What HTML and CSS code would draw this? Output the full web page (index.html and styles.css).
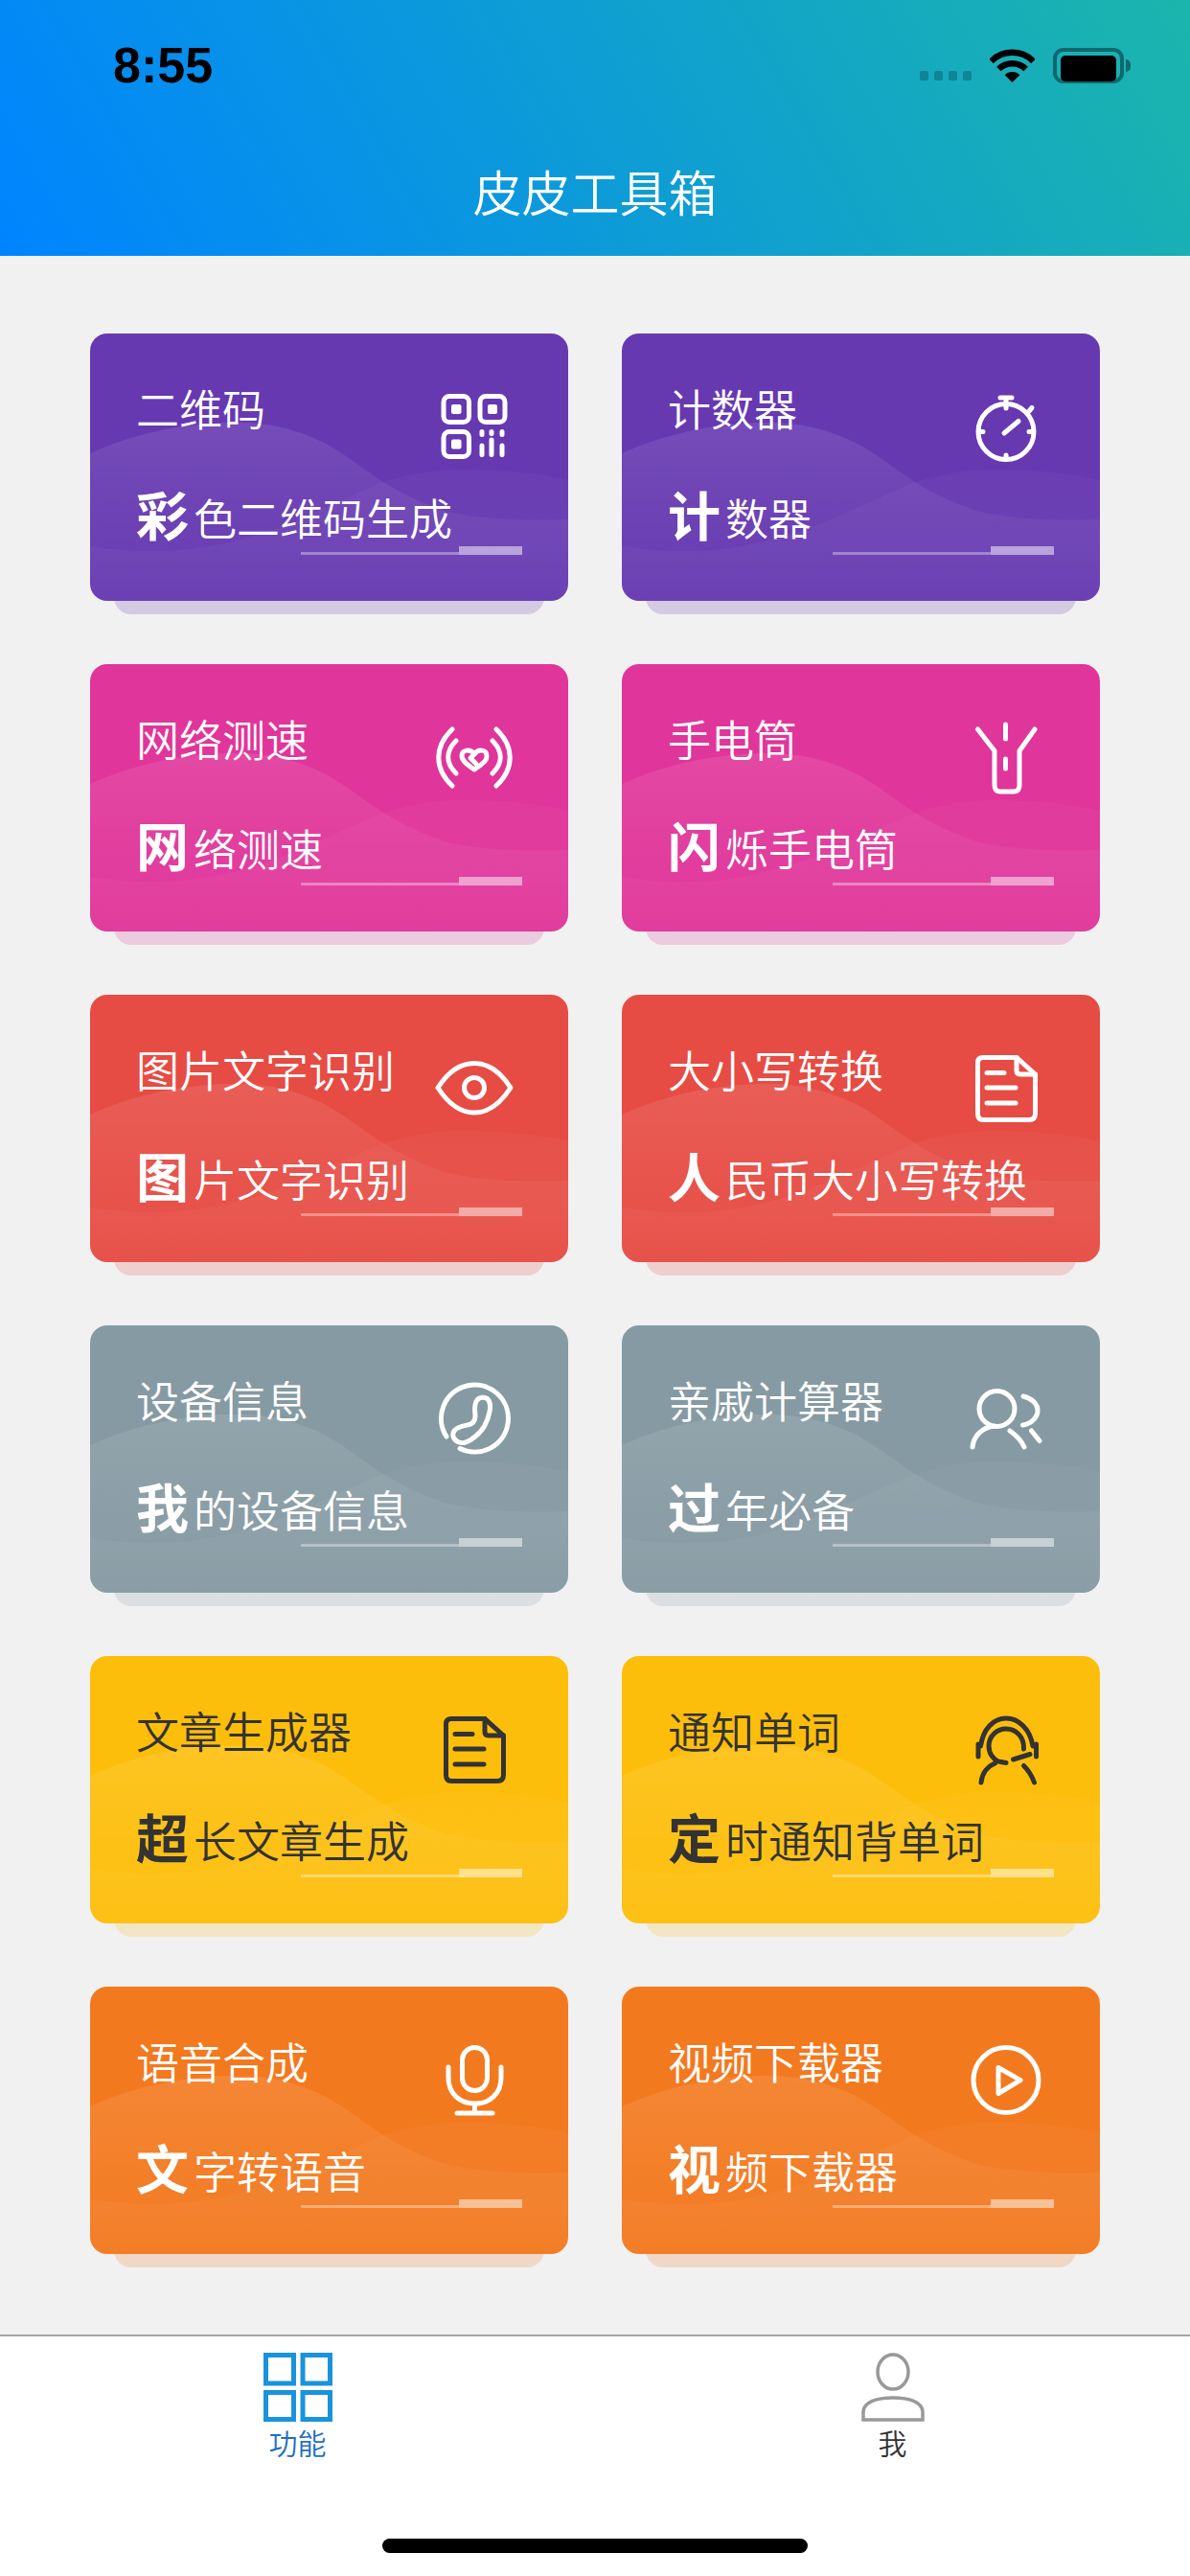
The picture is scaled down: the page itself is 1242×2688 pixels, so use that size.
FILE: index.html
```html
<!DOCTYPE html>
<html lang="zh-CN">
<head>
<meta charset="utf-8">
<title>皮皮工具箱</title>
<link rel="stylesheet" href="styles.css">
</head>
<body>
<svg class="sprite" aria-hidden="true">
  <defs>
    <linearGradient id="grad-a" x1="0" y1="90" x2="0" y2="279" gradientUnits="userSpaceOnUse">
      <stop offset="0" stop-color="#fff" stop-opacity=".1"/>
      <stop offset=".55" stop-color="#fff" stop-opacity=".045"/>
      <stop offset="1" stop-color="#fff" stop-opacity=".015"/>
    </linearGradient>
    <linearGradient id="grad-b" x1="0" y1="140" x2="0" y2="279" gradientUnits="userSpaceOnUse">
      <stop offset="0" stop-color="#fff" stop-opacity=".03"/>
      <stop offset=".6" stop-color="#fff" stop-opacity=".035"/>
      <stop offset="1" stop-color="#fff" stop-opacity=".02"/>
    </linearGradient>
    <symbol id="waves" viewBox="0 0 499 279">
      <path fill="url(#grad-a)" d="M0 125C40 107 90 94 145 93C190 92 220 102 246 115C270 128 285 142 306 155C330 170 350 178 370 185C400 193 450 196 499 194V279H0Z"/>
      <path fill="url(#grad-b)" d="M0 222C40 228 70 228 94 226C140 222 170 212 198 202C235 188 270 170 306 155C340 145 365 142 387 142C430 142 470 146 499 153V279H0Z"/>
    </symbol>
    <symbol id="i-qr" viewBox="0 0 90 90">
      <g class="ln">
        <rect x="13" y="13.500" width="26.500" height="27" rx="6"/>
        <rect x="51" y="13.500" width="26" height="27" rx="6"/>
        <rect x="13" y="50.500" width="26.500" height="26" rx="6"/>
        <path d="M53 50.500v3M63 50.500v2M74 50.500v3M53 65v9.500M63 59v15.500M74 65v9.500"/>
      </g>
      <rect class="fl" x="21" y="22" width="10.500" height="10" rx="2"/>
      <rect class="fl" x="59" y="22" width="10" height="10" rx="2"/>
      <rect class="fl" x="21" y="58.500" width="10.500" height="10" rx="2"/>
    </symbol>
    <symbol id="i-clock" viewBox="0 0 90 90">
      <g class="ln">
        <circle cx="45" cy="50.500" r="29"/>
        <path d="M39 15h12M45 15v6M43 52l15-12.500M69 29l3-3.500M45 22v4M45 75v4M17 50.500h4M69 50.500h4"/>
      </g>
    </symbol>
    <symbol id="i-signal" viewBox="0 0 90 90">
      <g class="ln">
        <path d="M22 16C3 34 3 57 22 75M26 28C15 39 15 51 26 62M68 16C87 34 87 57 68 75M64 28C75 39 75 51 64 62"/>
        <path d="M52 53L45 58C38 53 32 49 32 44C32 37 41 36 45 42C49 36 58 37 58 44C58 47 56 50 53 52"/>
        <path d="M45 42L41 46L47 52"/>
      </g>
    </symbol>
    <symbol id="i-torch" viewBox="0 0 90 90">
      <g class="ln">
        <path d="M44.500 11v15M44.500 47v10"/>
        <path d="M15.500 16L33 38.500V74Q33 81 39 81H53Q59 81 59 74V38.500L75 16"/>
      </g>
    </symbol>
    <symbol id="i-eye" viewBox="0 0 90 90">
      <g class="ln">
        <path d="M7 45C20 25 33 19.500 45 19.500C57 19.500 70 25 83 45C70 65 57 71 45 71C33 71 20 65 7 45Z"/>
        <circle cx="45" cy="45" r="10.500"/>
      </g>
    </symbol>
    <symbol id="i-doc" viewBox="0 0 90 90">
      <g class="ln">
        <path d="M21 13.500H56L75.500 31V72Q75.500 78.500 69 78.500H21Q15.500 78.500 15.500 72V19Q15.500 13.500 21 13.500Z"/>
        <path d="M56 13.500V27Q56 31 60 31H75.500"/>
        <path d="M25 29.500H43M25 45H55M25 61H55"/>
      </g>
    </symbol>
    <symbol id="i-phone" viewBox="0 0 90 90">
      <g class="ln">
        <path d="M16 64A35 35 0 1 1 30 76.500"/>
        <path d="M48 26C50 23 56 22 59 25C62 28 62 33 61 38C59 48 54 58 46 64C40 69 34 72 29 70C24 68 21 63 24 58C27 54 33 53 38 52C43 51 46 48 46 43C46 37 44 31 48 26Z"/>
      </g>
    </symbol>
    <symbol id="i-users" viewBox="0 0 90 90">
      <g class="ln">
        <circle cx="35.500" cy="35" r="18.500"/>
        <path d="M10 75C11 63 21 54 33 53M49 58C56 63 61 68 64 75M63 22C72 24 78 30 78 37C78 44 71 51 62.500 52M71.500 58L80 68.500"/>
      </g>
    </symbol>
    <symbol id="i-headset" viewBox="0 0 90 90">
      <g class="ln">
        <path d="M18.500 42C21 24 32 13 45 13C58 13 70 24 73 42M16 40V53M76.500 40V53"/>
        <path d="M63.500 45C64 32 55 24 45 24C35 24 27 32 27 42C27 50 32 56 37 58L45 59.500M52.500 56L70 50.500"/>
        <path d="M19 80C20 70 26 63 33.500 60M63.500 62.500C68 67 72 73 74.500 80"/>
      </g>
    </symbol>
    <symbol id="i-mic" viewBox="0 0 90 90">
      <g class="ln">
        <rect x="32.500" y="11.500" width="26" height="45" rx="13"/>
        <path d="M18 32V43C18 60 30 70 45.500 70C61 70 73 60 73 43V32M45.500 70V80M27 80H64"/>
      </g>
    </symbol>
    <symbol id="i-play" viewBox="0 0 90 90">
      <g class="ln">
        <circle cx="45" cy="45.500" r="34"/>
        <path d="M37 32.500L60 45.700L37 59.500Z"/>
      </g>
    </symbol>
  </defs>
</svg>

<header class="header">
  <div class="status">
    <span class="time">8:55</span>
    <div class="status-icons">
      <div class="signal"><i></i><i></i><i></i><i></i></div>
      <svg class="wifi" viewBox="0 0 47 36">
        <path class="wifi-arc" d="M1.500 14A31 31 0 0 1 45.500 14M9.400 22A20 20 0 0 1 37.600 22"/>
        <path d="M23.500 36L15.700 28.200A11 11 0 0 1 31.300 28.200Z"/>
      </svg>
      <div class="battery"><div class="battery-fill"></div></div>
    </div>
  </div>
  <h1 class="title">皮皮工具箱</h1>
</header>

<main class="main">
  <div class="grid">
    <a class="card purple">
      <svg class="waves"><use href="#waves"/></svg>
      <div class="card-top"><span class="card-title">二维码</span><svg class="icon"><use href="#i-qr"/></svg></div>
      <p class="card-sub"><b>彩</b>色二维码生成</p>
      <div class="rule"></div>
    </a>
    <a class="card purple">
      <svg class="waves"><use href="#waves"/></svg>
      <div class="card-top"><span class="card-title">计数器</span><svg class="icon"><use href="#i-clock"/></svg></div>
      <p class="card-sub"><b>计</b>数器</p>
      <div class="rule"></div>
    </a>
    <a class="card pink">
      <svg class="waves"><use href="#waves"/></svg>
      <div class="card-top"><span class="card-title">网络测速</span><svg class="icon"><use href="#i-signal"/></svg></div>
      <p class="card-sub"><b>网</b>络测速</p>
      <div class="rule"></div>
    </a>
    <a class="card pink">
      <svg class="waves"><use href="#waves"/></svg>
      <div class="card-top"><span class="card-title">手电筒</span><svg class="icon"><use href="#i-torch"/></svg></div>
      <p class="card-sub"><b>闪</b>烁手电筒</p>
      <div class="rule"></div>
    </a>
    <a class="card red">
      <svg class="waves"><use href="#waves"/></svg>
      <div class="card-top"><span class="card-title">图片文字识别</span><svg class="icon"><use href="#i-eye"/></svg></div>
      <p class="card-sub"><b>图</b>片文字识别</p>
      <div class="rule"></div>
    </a>
    <a class="card red">
      <svg class="waves"><use href="#waves"/></svg>
      <div class="card-top"><span class="card-title">大小写转换</span><svg class="icon"><use href="#i-doc"/></svg></div>
      <p class="card-sub"><b>人</b>民币大小写转换</p>
      <div class="rule"></div>
    </a>
    <a class="card grey">
      <svg class="waves"><use href="#waves"/></svg>
      <div class="card-top"><span class="card-title">设备信息</span><svg class="icon"><use href="#i-phone"/></svg></div>
      <p class="card-sub"><b>我</b>的设备信息</p>
      <div class="rule"></div>
    </a>
    <a class="card grey">
      <svg class="waves"><use href="#waves"/></svg>
      <div class="card-top"><span class="card-title">亲戚计算器</span><svg class="icon"><use href="#i-users"/></svg></div>
      <p class="card-sub"><b>过</b>年必备</p>
      <div class="rule"></div>
    </a>
    <a class="card yellow">
      <svg class="waves"><use href="#waves"/></svg>
      <div class="card-top"><span class="card-title">文章生成器</span><svg class="icon"><use href="#i-doc"/></svg></div>
      <p class="card-sub"><b>超</b>长文章生成</p>
      <div class="rule"></div>
    </a>
    <a class="card yellow">
      <svg class="waves"><use href="#waves"/></svg>
      <div class="card-top"><span class="card-title">通知单词</span><svg class="icon"><use href="#i-headset"/></svg></div>
      <p class="card-sub"><b>定</b>时通知背单词</p>
      <div class="rule"></div>
    </a>
    <a class="card orange">
      <svg class="waves"><use href="#waves"/></svg>
      <div class="card-top"><span class="card-title">语音合成</span><svg class="icon"><use href="#i-mic"/></svg></div>
      <p class="card-sub"><b>文</b>字转语音</p>
      <div class="rule"></div>
    </a>
    <a class="card orange">
      <svg class="waves"><use href="#waves"/></svg>
      <div class="card-top"><span class="card-title">视频下载器</span><svg class="icon"><use href="#i-play"/></svg></div>
      <p class="card-sub"><b>视</b>频下载器</p>
      <div class="rule"></div>
    </a>
  </div>
</main>

<footer class="tabbar">
  <nav class="tabs">
    <a class="tab tab-on">
      <svg class="tab-icon" viewBox="0 0 72 72">
        <g class="tab-grid">
          <rect x="2.500" y="2.500" width="29" height="29.500"/>
          <rect x="41" y="2.500" width="28.500" height="29.500"/>
          <rect x="2.500" y="41.500" width="29" height="28"/>
          <rect x="41" y="41.500" width="28.500" height="28"/>
        </g>
      </svg>
      <span>功能</span>
    </a>
    <a class="tab">
      <svg class="tab-icon" viewBox="0 0 72 72">
        <g class="tab-user">
          <ellipse cx="36" cy="20" rx="16" ry="18"/>
          <path d="M5 70V62C5 51 20 47 36 47C52 47 67 51 67 62V70Z"/>
        </g>
      </svg>
      <span>我</span>
    </a>
  </nav>
  <div class="home"></div>
</footer>
</body>
</html>
```

FILE: styles.css
```css
* { box-sizing: border-box; }
html, body { margin: 0; padding: 0; }
body {
  width: 1242px;
  height: 2688px;
  display: flex;
  flex-direction: column;
  background: #f1f1f1;
  font-family: "Noto Sans CJK SC", "Noto Sans", sans-serif;
  overflow: hidden;
}
.sprite { position: absolute; width: 0; height: 0; }

.header {
  height: 267px;
  flex: none;
  background: linear-gradient(60deg, #0084ff 0%, #1cb5ac 100%);
}
.status {
  height: 136px;
  padding: 0 64px 0 118px;
  display: flex;
  align-items: center;
  justify-content: space-between;
}
.time {
  font: 700 52px/1 "Liberation Sans", Arial, sans-serif;
  color: #000;
}
.status-icons { display: flex; align-items: center; gap: 19px; }
.signal { display: flex; gap: 6px; align-self: flex-end; margin-bottom: 3px; }
.signal i { width: 9px; height: 10px; border-radius: 2px; background: rgba(0, 0, 0, .22); }
.wifi { width: 47px; height: 36px; fill: #000; }
.wifi-arc { fill: none; stroke: #000; stroke-width: 6.5; }
.battery {
  position: relative;
  width: 74px;
  height: 37px;
  padding: 5px;
  border: 4px solid rgba(0, 0, 0, .4);
  border-radius: 11px;
  margin-right: 5px;
}
.battery::after {
  content: "";
  position: absolute;
  top: 8px;
  right: -11px;
  width: 5px;
  height: 13px;
  border-radius: 0 5px 5px 0;
  background: rgba(0, 0, 0, .4);
}
.battery-fill { margin: -1px; height: 27px; border-radius: 5px; background: #000; }
.title {
  margin: 0;
  height: 131px;
  padding-bottom: 6px;
  display: flex;
  align-items: center;
  justify-content: center;
  font-size: 51px;
  font-weight: 350;
  color: #fff;
}

.main {
  flex: 1;
  padding: 81px 94px 0;
  isolation: isolate;
}
.grid {
  display: grid;
  grid-template-columns: 499px 499px;
  grid-auto-rows: 279px;
  column-gap: 56px;
  row-gap: 66px;
}
.card {
  position: relative;
  display: block;
  padding: 48px 53px 0 48px;
  border-radius: 18px;
  background: var(--c);
  color: var(--t, #fff);
}
.card::after {
  content: "";
  position: absolute;
  left: 25px;
  right: 25px;
  bottom: -14px;
  height: 60px;
  border-radius: 18px;
  background: var(--c);
  opacity: .2;
  z-index: -1;
}
.purple { --c: #6639b1; }
.pink { --c: #e0359a; }
.red { --c: #e64c44; }
.grey { --c: #869aa3; }
.yellow { --c: #fdbe0b; --t: #333; }
.orange { --c: #f3791f; }

.waves {
  position: absolute;
  left: 0;
  top: 0;
  width: 100%;
  height: 100%;
  border-radius: 18px;
}
.card-top {
  position: relative;
  height: 107px;
  display: flex;
  justify-content: space-between;
  align-items: flex-start;
}
.card-title { font-size: 45px; line-height: 60px; font-weight: 350; }
.icon { width: 90px; height: 90px; margin-top: 4px; flex: none; }
.ln { fill: none; stroke: currentColor; stroke-width: 5; stroke-linecap: round; stroke-linejoin: round; }
.fl { fill: currentColor; }
.card-sub {
  position: relative;
  margin: 0;
  height: 64px;
  font-size: 45px;
  line-height: 64px;
  font-weight: 350;
  white-space: nowrap;
}
.card-sub b { font-size: 55px; font-weight: 700; margin-right: 5px; }
.rule {
  position: absolute;
  right: 48px;
  bottom: 48px;
  width: 231px;
  height: 9px;
  background:
    linear-gradient(rgba(255, 255, 255, .5), rgba(255, 255, 255, .5)) right bottom / 66px 9px no-repeat,
    linear-gradient(rgba(255, 255, 255, .35), rgba(255, 255, 255, .35)) left bottom / 165px 3px no-repeat;
}

.tabbar {
  height: 252px;
  flex: none;
  display: flex;
  flex-direction: column;
  border-top: 2px solid #a6a6a6;
  background: #fff;
}
.tabs { display: flex; }
.tab {
  flex: 1;
  padding-top: 17px;
  display: flex;
  flex-direction: column;
  align-items: center;
  font-size: 30px;
  line-height: 36px;
  font-weight: 350;
  color: #333;
}
.tab-on { color: #1f6fc4; }
.tab-icon { width: 72px; height: 72px; margin-bottom: 3px; }
.tab-grid { fill: none; stroke: #1a93dd; stroke-width: 5; }
.tab-user { fill: none; stroke: #999; stroke-width: 3.500; }
.home {
  width: 444px;
  height: 15px;
  margin: auto auto 24px;
  border-radius: 8px;
  background: #000;
}
```
